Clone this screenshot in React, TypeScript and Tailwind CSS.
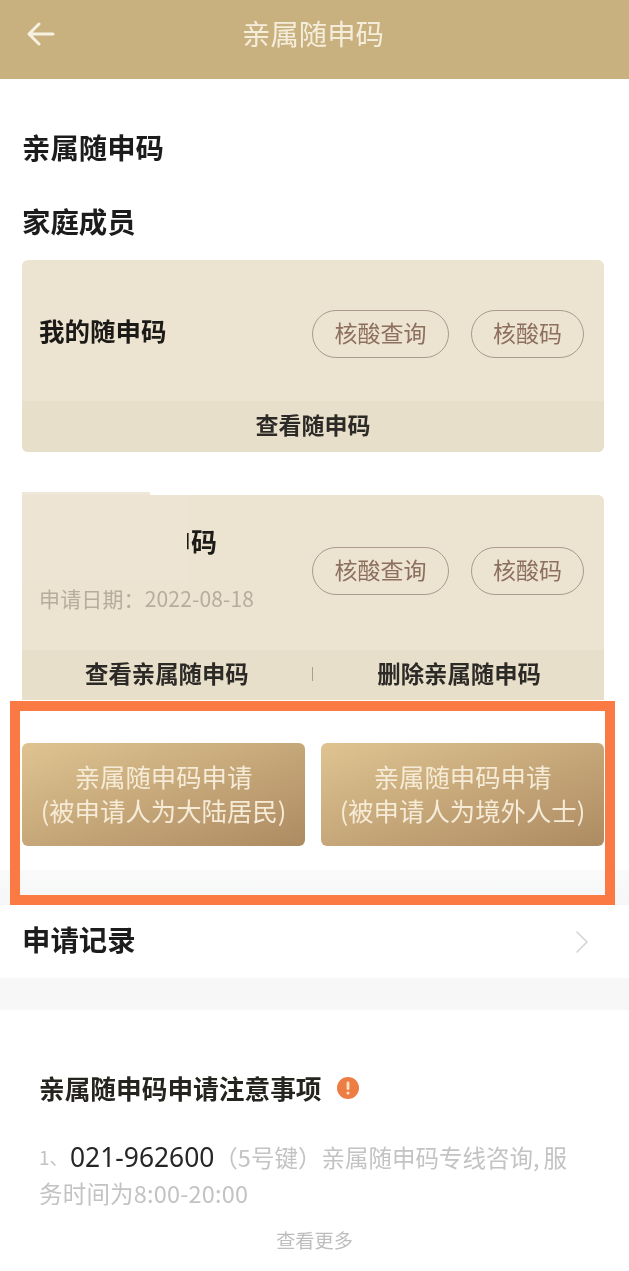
const font = { fontFamily: '"Noto Sans CJK SC", "Noto Sans", sans-serif' };

function Pills() {
  return (
    <div className="flex items-center gap-[22px]">
      <div className="flex h-[48px] w-[137px] items-center justify-center rounded-full border-[1.5px] border-[#ab9a8b] pb-[3px] text-[23px] leading-none text-[#8d6f5d]">核酸查询</div>
      <div className="flex h-[48px] w-[113px] items-center justify-center rounded-full border-[1.5px] border-[#ab9a8b] pb-[3px] text-[23px] leading-none text-[#8d6f5d]">核酸码</div>
    </div>
  );
}

function ApplyButton({ who }: { who: string }) {
  return (
    <div className="flex h-[103px] flex-1 flex-col items-center justify-center rounded-[6px] bg-gradient-to-br from-[#dfc491] to-[#ad8b62] pb-[4px] text-[25.4px] leading-[34px] whitespace-nowrap text-[#f5ebd7]">
      <div>亲属随申码申请</div>
      <div>(被申请人为{who})</div>
    </div>
  );
}

export default function App() {
  return (
    <div style={font} className="relative h-[1271px] w-[629px] overflow-hidden bg-white blur-[0.7px]">
      <header className="flex h-[79px] items-center justify-center bg-[#c9b17f] pr-[3px] pb-[13px]">
        <svg className="absolute left-[27px] top-[21px]" width="28" height="26" viewBox="0 0 28 26" fill="none" stroke="#f7f1e2" strokeWidth="3" strokeLinecap="round" strokeLinejoin="round">
          <path d="M26 13H3M12 3 2 13l10 10" />
        </svg>
        <h1 className="text-[28.4px] leading-none font-normal text-[#f5eddb]">亲属随申码</h1>
      </header>

      <main className="pr-[25px] pl-[22px]">
        <div className="mt-[46px] h-[44px] text-[28.4px] leading-[44px] font-bold text-[#1c1c1c]">亲属随申码</div>
        <div className="mt-[30px] h-[46px] text-[28.4px] leading-[44px] font-bold text-[#1c1c1c]">家庭成员</div>

        <section className="mt-[15px] overflow-hidden rounded-[6px] bg-[#ece3d1]">
          <div className="flex h-[141px] items-center justify-between pt-[7px] pr-[20px] pl-[17px]">
            <div className="-mt-[8px] text-[25.5px] leading-none font-bold text-[#1c1a17]">我的随申码</div>
            <Pills />
          </div>
          <div className="flex h-[51px] items-center justify-center bg-[#e8dfca] pb-[4px] text-[23px] leading-none font-bold text-[#2c2a26]">查看随申码</div>
        </section>

        <section className="relative mt-[43px] rounded-[6px] bg-[#ece3d1]">
          <div className="relative flex h-[155px] justify-between pr-[20px] pl-[17px]">
            <div className="pt-[32px]">
              <div className="ml-[48px] text-[26px] leading-[28px] font-bold text-[#1c1a17]">亲属随申码</div>
              <div className="mt-[29px] text-[21px] leading-[28px] tracking-[0.15px] whitespace-nowrap text-[#b7ad9c]">申请日期：2022-08-18</div>
            </div>
            <div className="pt-[52px]"><Pills /></div>
            <div className="absolute -top-[3px] left-0 h-[3px] w-[128px] bg-[#efe8d9]" />
            <div className="absolute top-0 left-0 h-[86px] w-[165px] bg-[#ede4d3]" />
          </div>
          <div className="flex h-[50px] items-center bg-[#e8dfca] pb-[2px] text-[23.4px] leading-none font-bold text-[#2c2a26]">
            <div className="flex flex-1 justify-center">查看亲属随申码</div>
            <div className="h-[14px] w-[1.5px] bg-[#a9a08f]" />
            <div className="flex flex-1 justify-center pl-[1px]">删除亲属随申码</div>
          </div>
        </section>

        <div className="mt-[43px] flex gap-[16px]">
          <ApplyButton who="大陆居民" />
          <ApplyButton who="境外人士" />
        </div>
      </main>

      <div className="mt-[24px] h-[35px] bg-gradient-to-b from-[#fafafa] to-[#f5f6f7]" />

      <div className="flex h-[73px] items-center justify-between pr-[40px] pb-[4px] pl-[22px]">
        <div className="text-[28.4px] leading-none font-bold text-[#1c1c1c]">申请记录</div>
        <svg className="mt-[4px]" width="14" height="24" viewBox="0 0 14 24" fill="none" stroke="#d4d4d4" strokeWidth="1.6" strokeLinecap="round" strokeLinejoin="round">
          <path d="M2 2l10 10L2 22" />
        </svg>
      </div>

      <div className="h-[32px] bg-[#f7f7f7]" />

      <section className="px-[39px] pt-[63px]">
        <div className="flex h-[30px] items-center gap-[15px]">
          <div className="text-[25.7px] leading-none font-bold text-[#26241f]">亲属随申码申请注意事项</div>
          <svg width="22" height="22" viewBox="0 0 22 22">
            <circle cx="11" cy="11" r="11" fill="#ee7d45" />
            <rect x="9.6" y="4.5" width="2.8" height="8.5" rx="1.4" fill="#fbe4c4" />
            <circle cx="11" cy="16" r="1.6" fill="#fbe4c4" />
          </svg>
        </div>
        <div className="mt-[36px] text-[23.5px] leading-[36px] text-[#c3c3c3]">
          <div className="flex items-center whitespace-nowrap">
            <span className="w-[31px] text-[19px]">1、</span>
            <span className="text-[26.4px] text-[#262626]" style={{ fontFamily: '"Noto Sans", sans-serif' }}>021-962600</span>
            <span>（5号键）</span>
            <span>亲属随申码专线咨询</span>
            <span className="mr-[4px]">,</span>
            <span>服</span>
          </div>
          <div className="tracking-[0.2px]">务时间为8:00-20:00</div>
        </div>
        <div className="mt-[15px] text-center text-[19.2px] leading-[28px] text-[#bdbdbd]">查看更多</div>
      </section>

      <div className="pointer-events-none absolute top-[701px] left-[10px] h-[204px] w-[605px] border-[10px] border-[#fb7a44]" />
    </div>
  );
}
